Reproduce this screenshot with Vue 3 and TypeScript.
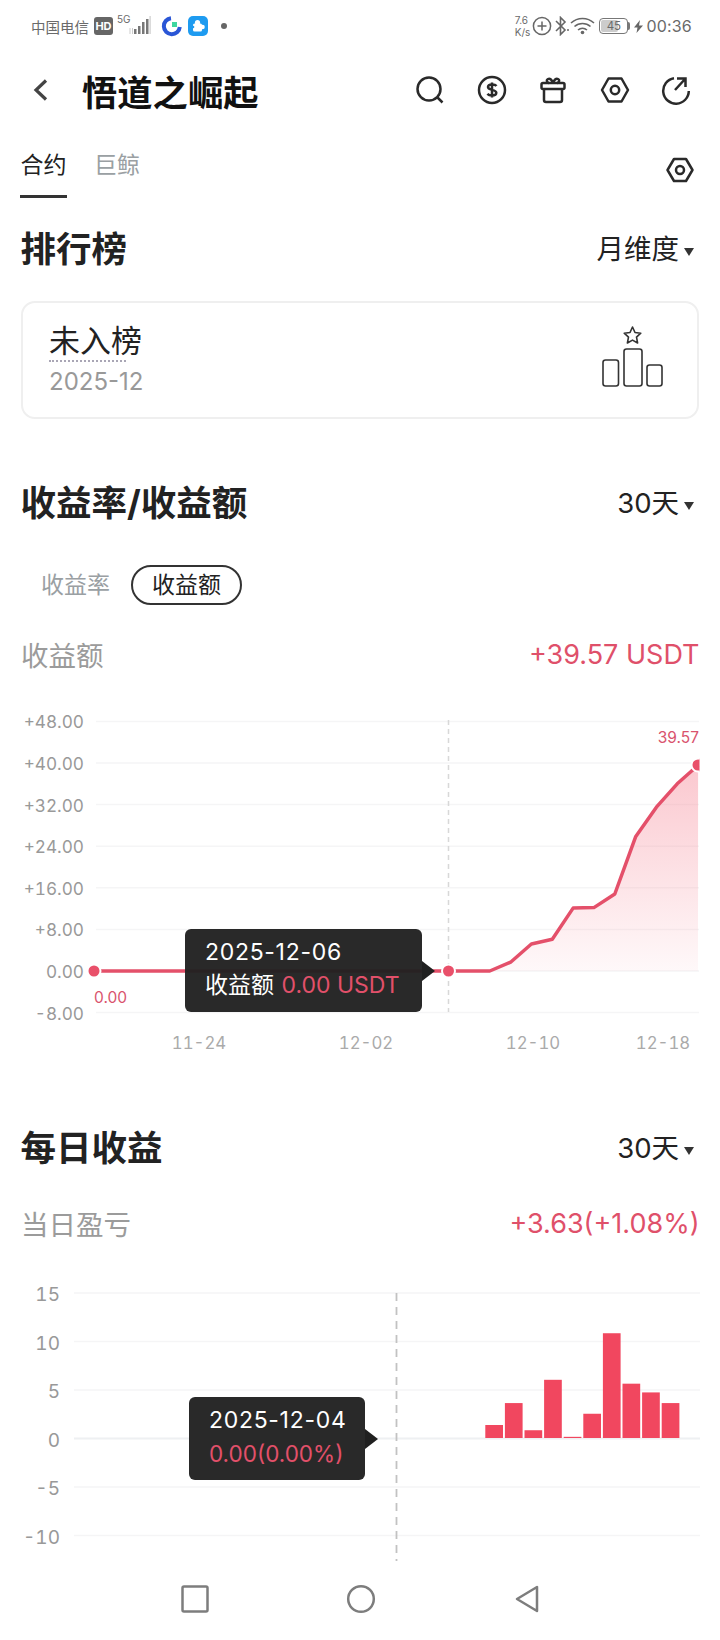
<template>
  <div class="page">
    <div class="status">
      <div class="status-left">
        <span class="carrier">中国电信</span>
        <span class="hd">HD</span>
        <span class="net">5G</span>
        <svg class="signal" width="22" height="20" viewBox="0 0 22 20">
          <path d="M1 12v6M3.500 12v6" stroke="#ccc" stroke-width="1" />
          <rect x="5" y="13" width="2.500" height="5" fill="#777" />
          <rect x="9" y="10" width="2.500" height="8" fill="#777" />
          <rect x="13" y="6" width="2.500" height="12" fill="#777" />
          <rect x="17" y="3" width="2.500" height="15" fill="#777" />
          <rect x="20.500" y="0" width="1.200" height="18" fill="#ccc" />
        </svg>
        <svg class="app-c" width="22" height="22" viewBox="0 0 22 22">
          <path d="M10 3.200A8 8 0 1 0 18.800 12" fill="none" stroke="#2a56d6" stroke-width="4" />
          <rect x="11" y="7" width="5" height="5" fill="#3ed6a0" />
        </svg>
        <svg class="app-p" width="20" height="20" viewBox="0 0 20 20">
          <rect width="20" height="20" rx="5" fill="#1e9bf0" />
          <rect x="5" y="7.500" width="9" height="8" rx="1.500" fill="#fff" />
          <circle cx="9.500" cy="6.500" r="2.600" fill="#fff" />
          <circle cx="14.500" cy="11" r="2.300" fill="#fff" />
          <circle cx="5" cy="11" r="1.300" fill="#1e9bf0" />
        </svg>
        <span class="dot"></span>
      </div>
      <div class="status-right">
        <span class="speed">7.6<br />K/s</span>
        <svg width="20" height="20" viewBox="0 0 20 20" fill="none" stroke="#666" stroke-width="1.500">
          <circle cx="10" cy="10" r="8.600" />
          <path d="M10 5.500v9M5.500 10h9" />
        </svg>
        <svg class="bt" width="15" height="20" viewBox="0 0 15 20" fill="none" stroke="#666" stroke-width="1.600">
          <path d="M1 5l9 9-4.500 4.500V1.500L10 6l-9 9" />
          <circle cx="13" cy="14" r="1" fill="#666" stroke="none" />
        </svg>
        <svg class="wifi" width="25" height="18" viewBox="0 0 25 18" fill="none" stroke="#666" stroke-width="1.600">
          <path d="M1 6a17 17 0 0 1 23 0M4.500 9.500a12 12 0 0 1 16 0M8 13a7 7 0 0 1 9 0" />
          <circle cx="12.500" cy="15.500" r="1.800" fill="#666" stroke="none" />
        </svg>
        <span class="battery"><span class="battery-fill"></span><span class="battery-num">45</span></span>
        <svg class="bolt" width="9" height="13" viewBox="0 0 9 13"><path d="M6 0L0 7.500h3.500L2.500 13 9 5.500H5z" fill="#666" /></svg>
        <span class="clock">00:36</span>
      </div>
    </div>

    <div class="header">
      <svg class="back" width="16" height="24" viewBox="0 0 16 24" fill="none" stroke="#444" stroke-width="3.200">
        <path d="M13 2.500L3 12l10 9.500" />
      </svg>
      <div class="title">悟道之崛起</div>
      <div class="actions">
        <svg width="30" height="30" viewBox="0 0 30 30" fill="none" stroke="#2a2a2a" stroke-width="2.500">
          <circle cx="14" cy="14" r="11.500" />
          <path d="M22 22l5.500 5.500" />
        </svg>
        <svg width="30" height="30" viewBox="0 0 30 30" fill="none" stroke="#2a2a2a" stroke-width="2.500">
          <circle cx="15" cy="15" r="13" />
          <path d="M19.500 11c-.8-1.100-2.500-1.500-4.500-1.500-2.300 0-4 .9-4 2.600s1.800 2.300 4 2.800 4.300 1.100 4.300 2.900-2 2.700-4.300 2.700c-1.900 0-3.600-.5-4.600-1.600M15 7.500v15" />
        </svg>
        <svg width="30" height="30" viewBox="0 0 30 30" fill="none" stroke="#2a2a2a" stroke-width="2.500" stroke-linejoin="round">
          <rect x="3.500" y="8" width="23" height="6" rx="1.500" />
          <path d="M6 14v11a2 2 0 0 0 2 2h14a2 2 0 0 0 2-2V14" />
          <path d="M15 8c-1-3-3-5-5-4s-1 4 1 4M15 8c1-3 3-5 5-4s1 4-1 4" />
        </svg>
        <svg width="30" height="30" viewBox="0 0 30 30" fill="none" stroke="#2a2a2a" stroke-width="2.500" stroke-linejoin="round">
          <path d="M8.500 3.500h13L28 15l-6.500 11.500h-13L2 15z" />
          <circle cx="15" cy="15" r="4.200" />
        </svg>
        <svg width="30" height="30" viewBox="0 0 30 30" fill="none" stroke="#2a2a2a" stroke-width="2.500">
          <path d="M13 3.200A12.800 12.800 0 1 0 27.800 16" />
          <path d="M16 3.500h8.500V12M24.500 3.500L14 15" />
        </svg>
      </div>
    </div>

    <div class="tabs">
      <div class="tab active">合约</div>
      <div class="tab">巨鲸</div>
      <svg class="tabs-gear" width="28" height="26" viewBox="0 0 28 26" fill="none" stroke="#2a2a2a" stroke-width="2.500" stroke-linejoin="round">
        <path d="M8 2h12l6.500 11L20 24H8L1.500 13z" />
        <circle cx="14" cy="13" r="4" />
      </svg>
    </div>

    <div class="section-head first">
      <h2>排行榜</h2>
      <div class="picker">月维度<i class="caret"></i></div>
    </div>

    <div class="rank-card">
      <div class="rank-text">
        <div class="rank-title">未入榜</div>
        <div class="rank-date">2025-12</div>
      </div>
      <svg class="podium" width="64" height="62" viewBox="0 0 64 62" fill="none" stroke="#333" stroke-width="1.600" stroke-linejoin="round">
        <path d="M32.500 2l2.500 5.500 5.800.7-4.300 4 1.100 5.800-5.100-2.900-5.100 2.900 1.100-5.800-4.300-4 5.800-.7z" />
        <rect x="3" y="35" width="15.500" height="26" rx="2.500" />
        <rect x="24" y="24" width="18" height="37" rx="2.500" />
        <rect x="47" y="40" width="15" height="21" rx="2.500" />
      </svg>
    </div>

    <div class="section-head second">
      <h2>收益率/收益额</h2>
      <div class="picker">30天<i class="caret"></i></div>
    </div>

    <div class="segments">
      <span class="seg">收益率</span>
      <span class="seg on">收益额</span>
    </div>

    <div class="summary summary-one">
      <span class="summary-label">收益额</span>
      <span class="summary-value">+39.57 USDT</span>
    </div>

    <div class="chart chart-line">
      <svg width="720" height="360" viewBox="0 700 720 360">
        <defs>
          <linearGradient id="area" x1="0" y1="0" x2="0" y2="1">
            <stop offset="0" stop-color="#f7919f" stop-opacity="0.5" />
            <stop offset="1" stop-color="#f7919f" stop-opacity="0.06" />
          </linearGradient>
          <clipPath id="plot"><rect x="0" y="700" width="699.500" height="360" /></clipPath>
        </defs>
        <line v-for="t in lineTicks" :key="t.label" x1="96" x2="699" :y1="t.y" :y2="t.y" class="grid" />
        <text v-for="t in lineTicks" :key="t.label + 't'" x="84" :y="t.y + 7" text-anchor="end" class="axis">{{ t.label }}</text>
        <text v-for="d in lineDates" :key="d.label" :x="d.x" y="1049" text-anchor="middle" class="axis-date">{{ d.label }}</text>
        <path :d="areaPath" fill="url(#area)" />
        <line x1="448.500" x2="448.500" y1="720" y2="1012" class="cross" />
        <path :d="linePath" class="curve" />
        <circle cx="94" cy="971" r="6.500" class="marker" />
        <circle cx="448.500" cy="971" r="6.500" class="marker" />
        <g clip-path="url(#plot)"><circle cx="698" cy="765" r="6.500" class="marker" /></g>
        <text x="94" y="1003" class="point-label">0.00</text>
        <text x="699" y="743" text-anchor="end" class="point-label">39.57</text>
      </svg>
      <div class="tip tip-line">
        <div class="tip-date">2025-12-06</div>
        <div class="tip-row">收益额 <em>0.00 USDT</em></div>
      </div>
    </div>

    <div class="section-head third">
      <h2>每日收益</h2>
      <div class="picker">30天<i class="caret"></i></div>
    </div>

    <div class="summary summary-two">
      <span class="summary-label">当日盈亏</span>
      <span class="summary-value">+3.63(+1.08%)</span>
    </div>

    <div class="chart chart-bars">
      <svg width="720" height="295" viewBox="0 1270 720 295">
        <line v-for="t in barTicks" :key="t.label" x1="74" x2="700" :y1="t.y" :y2="t.y" class="grid" :class="{ zero: t.label === '0' }" />
        <text v-for="t in barTicks" :key="t.label + 't'" x="60" :y="t.y + 8" text-anchor="end" class="axis bar-axis">{{ t.label }}</text>
        <rect v-for="b in bars" :key="b.x" :x="b.x" :y="b.y" width="17.700" :height="b.h" fill="#f1475f" />
        <line x1="396.500" x2="396.500" y1="1293" y2="1561" class="cross bar-cross" />
      </svg>
      <div class="tip tip-bars">
        <div class="tip-date">2025-12-04</div>
        <div class="tip-row"><em>0.00(0.00%)</em></div>
      </div>
    </div>

    <div class="nav">
      <svg width="30" height="30" viewBox="0 0 30 30" fill="none" stroke="#7d7d7d" stroke-width="2.500" stroke-linejoin="round">
        <rect x="2.500" y="2.500" width="25" height="25" rx="1.500" />
      </svg>
      <svg width="30" height="30" viewBox="0 0 30 30" fill="none" stroke="#7d7d7d" stroke-width="2.500">
        <circle cx="15" cy="15" r="12.800" />
      </svg>
      <svg width="30" height="30" viewBox="0 0 30 30" fill="none" stroke="#7d7d7d" stroke-width="2.500" stroke-linejoin="round">
        <path d="M25 3v24L5 15z" />
      </svg>
    </div>
  </div>
</template>

<script setup lang="ts">
const lineZero = 971
const lineUnit = 5.2

// last values of the 30 day curve, everything before stays at 0
const tail = [0, 1.7, 5.2, 6.1, 12.1, 12.2, 14.8, 25.8, 31.5, 36, 39.57]
const values = [...Array(19).fill(0), ...tail] as number[]

const points = values.map((v, i) => ({
  x: 94 + i * 20.83,
  y: lineZero - v * lineUnit,
}))

const linePath = 'M' + points.map((p) => `${p.x.toFixed(1)} ${p.y.toFixed(1)}`).join('L')
const areaPath = linePath + `L698 ${lineZero}L94 ${lineZero}Z`

const lineTicks = ['+48.00', '+40.00', '+32.00', '+24.00', '+16.00', '+8.00', '0.00', '-8.00'].map((label, i) => ({
  label,
  y: 971 - (6 - i) * 41.6,
}))

const lineDates = [
  { label: '11-24', x: 199 },
  { label: '12-02', x: 366 },
  { label: '12-10', x: 533 },
  { label: '12-18', x: 663 },
]

const barTicks = ['15', '10', '5', '0', '-5', '-10'].map((label, i) => ({
  label,
  y: 1293 + i * 48.5,
}))

const barValues = [1.34, 3.6, 0.8, 6, 0.12, 2.5, 10.8, 5.6, 4.7, 3.6]
const bars = barValues.map((v, i) => ({
  x: 485.3 + i * 19.6,
  y: 1438 - v * 9.7,
  h: v * 9.7,
}))
</script>

<style scoped>
.page {
  width: 720px;
  height: 1640px;
  overflow: hidden;
  background: #fff;
  color: #222;
  font-family: Inter, "Noto Sans CJK SC", sans-serif;
  display: flex;
  flex-direction: column;
}

/* Status bar */
.status {
  height: 52px;
  flex: none;
  display: flex;
  justify-content: space-between;
  align-items: center;
  padding: 0 28px 0 31px;
  color: #6a6a6a;
}
.status-left,
.status-right {
  display: flex;
  align-items: center;
}
.carrier {
  font-size: 14.5px;
}
.hd {
  width: 19px;
  height: 18px;
  margin-left: 5px;
  border-radius: 3px;
  background: #666;
  color: #fff;
  font-size: 11px;
  font-weight: 700;
  line-height: 18px;
  text-align: center;
}
.net {
  align-self: flex-start;
  margin: -2px 0 0 4px;
  font-size: 10px;
  line-height: 12px;
}
.signal {
  margin-left: -2px;
}
.app-c {
  margin-left: 10px;
}
.app-p {
  margin-left: 5px;
}
.dot {
  width: 6px;
  height: 6px;
  margin-left: 13px;
  border-radius: 50%;
  background: #666;
}
.speed {
  margin-right: 2px;
  font-size: 10px;
  line-height: 12px;
}
.bt {
  margin-left: 3px;
}
.battery {
  position: relative;
  width: 29px;
  height: 16px;
  margin-left: 4px;
  border: 1px solid #777;
  border-radius: 4px;
  box-sizing: border-box;
}
.battery::after {
  content: "";
  position: absolute;
  left: 100%;
  top: 3px;
  width: 2px;
  height: 8px;
  margin-left: 1px;
  border-radius: 0 2px 2px 0;
  background: #777;
}
.battery-fill {
  position: absolute;
  inset: 1px 9px 1px 1px;
  border-radius: 2px;
  background: #ccc;
}
.battery-num {
  position: absolute;
  inset: 0;
  font-size: 11.5px;
  line-height: 14px;
  text-align: center;
}
.bolt {
  margin-left: 6px;
}
.clock {
  margin-left: 3px;
  font-size: 16px;
  letter-spacing: 0.2px;
}

/* Title bar */
.header {
  height: 76px;
  flex: none;
  display: flex;
  align-items: center;
  padding: 0 29px 0 33px;
}
.back {
  flex: none;
}
.title {
  margin-left: 33px;
  font-size: 35.3px;
  font-weight: 700;
  color: #111;
}
.actions {
  margin-left: auto;
  display: flex;
  gap: 31.500px;
}

/* Tabs */
.tabs {
  height: 70px;
  flex: none;
  display: flex;
  align-items: flex-end;
  padding: 0 26px 0 20px;
}
.tab {
  box-sizing: border-box;
  height: 70px;
  margin-right: 27px;
  border-bottom: 3px solid transparent;
  font-size: 23px;
  line-height: 74px;
  color: #9aa0a3;
}
.tab.active {
  width: 47px;
  border-bottom-color: #333;
  text-align: center;
  color: #222;
}
.tabs-gear {
  margin: 0 0 15px auto;
}

/* Section headings */
.section-head {
  height: 50px;
  flex: none;
  display: flex;
  justify-content: space-between;
  align-items: center;
  padding: 0 26px 0 20.500px;
}
.section-head.first {
  margin-top: 25px;
}
.section-head.second {
  margin-top: 58px;
}
.section-head.third {
  margin-top: 62px;
}
.section-head h2 {
  margin: 0;
  padding-bottom: 4px;
  font-size: 35.5px;
  font-weight: 700;
  color: #222;
}
.picker {
  display: flex;
  align-items: center;
  margin-bottom: 2px;
  font-size: 27.5px;
  color: #222;
}
.caret {
  width: 0;
  height: 0;
  margin: 10px 0 0 5px;
  border-left: 5.500px solid transparent;
  border-right: 5.500px solid transparent;
  border-top: 8px solid #333;
}

/* Rank card */
.rank-card {
  height: 118px;
  flex: none;
  margin: 28px 21px 0;
  padding: 0 33px 0 26px;
  box-sizing: border-box;
  border: 2px solid #efefef;
  border-radius: 14px;
  display: flex;
  justify-content: space-between;
  align-items: center;
}
.rank-text {
  margin-bottom: 3px;
}
.rank-title {
  position: relative;
  font-size: 31px;
  line-height: 40px;
  color: #222;
}
/* dotted underline stops short of the last glyph */
.rank-title::after {
  content: "";
  position: absolute;
  left: 0;
  bottom: -1px;
  width: 77px;
  border-bottom: 2px dotted #a9a6b5;
}
.rank-date {
  margin-top: 6px;
  font-size: 24px;
  line-height: 30px;
  color: #999;
}
.podium {
  margin-bottom: 8px;
}

/* Rate / amount switch */
.segments {
  height: 40px;
  flex: none;
  margin-top: 38px;
  padding-left: 20px;
  display: flex;
  align-items: center;
}
.seg {
  padding: 0 21px;
  font-size: 23px;
  line-height: 36px;
  color: #9aa0a3;
}
.seg.on {
  padding: 0 19px;
  border: 2px solid #333;
  border-radius: 20px;
  color: #222;
}

/* Summary rows */
.summary {
  height: 40px;
  flex: none;
  padding: 0 20.500px 0 21px;
  display: flex;
  justify-content: space-between;
  align-items: center;
  font-size: 27.5px;
}
.summary-one {
  margin-top: 29px;
}
.summary-two {
  margin-top: 31px;
}
.summary-label {
  color: #9b9b9b;
}
.summary-value {
  font-size: 27px;
  color: #df506a;
}

/* Charts */
.chart {
  position: relative;
  flex: none;
}
.chart svg {
  display: block;
}
.chart-line {
  height: 360px;
  margin-top: 26px;
}
.chart-bars {
  height: 295px;
  margin-top: 27px;
}
.grid {
  stroke: #f5f5f6;
  stroke-width: 1.500;
}
.grid.zero {
  stroke: #eef0f2;
  stroke-width: 2;
}
.axis {
  font-size: 17.2px;
  font-variant-numeric: tabular-nums;
  fill: #999;
}
.bar-axis {
  font-size: 19px;
}
.axis-date {
  font-size: 16.8px;
  font-variant-numeric: tabular-nums;
  fill: #aaa;
}
.cross {
  stroke: #d8d8d8;
  stroke-width: 1.500;
  stroke-dasharray: 5 4;
}
.bar-cross {
  stroke: #c2c2c2;
  stroke-width: 1.800;
  stroke-dasharray: 8 6;
}
.curve {
  fill: none;
  stroke: #e4506a;
  stroke-width: 3.500;
  stroke-linejoin: round;
}
.marker {
  fill: #e9506a;
  stroke: #fff;
  stroke-width: 2;
}
.point-label {
  font-size: 15.500px;
  fill: #d9536d;
}

/* Tooltips */
.tip {
  position: absolute;
  box-sizing: border-box;
  height: 83px;
  padding: 7px 20px;
  border-radius: 6px;
  background: rgba(32, 32, 32, 0.96);
  color: #fff;
  font-size: 23px;
  line-height: 33px;
}
.tip::after {
  content: "";
  position: absolute;
  left: 100%;
  top: 32px;
  border-top: 10px solid transparent;
  border-bottom: 10px solid transparent;
  border-left: 13px solid #202020;
}
.tip-line {
  left: 185px;
  top: 229px;
  width: 237px;
}
.tip-bars {
  left: 189px;
  top: 127px;
  width: 176px;
}
.tip-date {
  letter-spacing: 0.7px;
  white-space: nowrap;
}
.tip-row {
  white-space: nowrap;
}
.tip-row em {
  margin-left: 1px;
  font-style: normal;
  color: #e2506a;
}
.tip-bars em {
  margin-left: 0;
  font-size: 22.5px;
}

/* System navigation */
.nav {
  height: 68px;
  flex: none;
  display: flex;
  justify-content: center;
  align-items: center;
  gap: 136px;
  padding-left: 1px;
}
</style>

<style>
html,
body {
  margin: 0;
  background: #fff;
}
</style>
